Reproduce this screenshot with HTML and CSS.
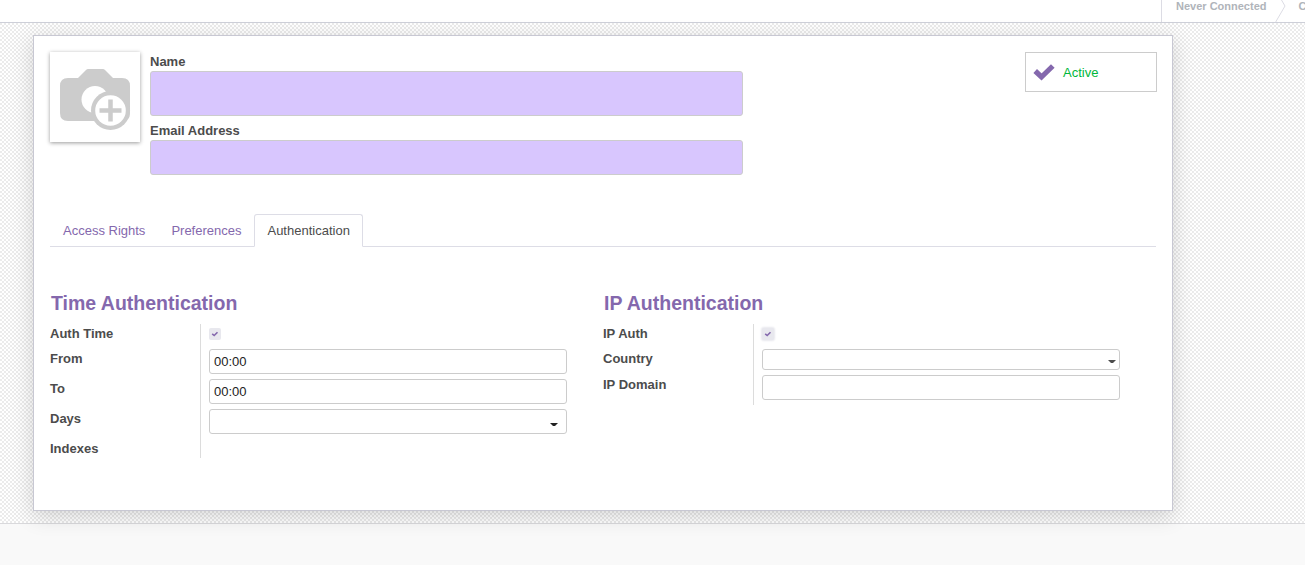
FILE: index.html
```html
<!DOCTYPE html>
<html lang="en">
<head>
<meta charset="utf-8">
<title>User</title>
<link rel="stylesheet" href="styles.css">
</head>
<body>
<header class="control-bar">
  <div class="status-bar">
    <span class="status">Never Connected</span>
    <svg class="status-arrow" width="12" height="36" viewBox="0 0 12 36" aria-hidden="true"><path d="M.5 0 11 18 .5 36" fill="none" stroke="#dcdce4"/></svg>
    <span class="status">Confirmed</span>
  </div>
</header>
<main class="form-view">
  <form class="sheet">
    <div class="top">
      <button type="button" class="avatar" aria-label="Upload photo">
        <svg width="90" height="90" viewBox="0 0 90 90" aria-hidden="true">
          <path fill="#ccc" d="M18 26h10l8-8q1-1 2-1h15q1 0 2 1l8 8h9q8 0 8 8v27q0 8-8 8H18q-8 0-8-8V34q0-8 8-8z"/>
          <circle cx="45" cy="47.500" r="13.500" fill="#fff"/>
          <circle cx="60.500" cy="58.500" r="19.500" fill="#ccc"/>
          <circle cx="60.500" cy="58.500" r="15.300" fill="#fff"/>
          <path d="M60.500 47.500v22M49.500 58.500h22" stroke="#ccc" stroke-width="4.500"/>
        </svg>
      </button>
      <div class="identity">
        <label for="name">Name</label>
        <input class="required name" id="name" type="text">
        <label for="email">Email Address</label>
        <input class="required email" id="email" type="email">
      </div>
      <button type="button" class="active-toggle">
        <svg width="22" height="18" viewBox="0 0 22 18" aria-hidden="true"><path d="M2.200 8 8.500 14 19.800 3" fill="none" stroke="#8468ad" stroke-width="5.200"/></svg>
        Active
      </button>
    </div>
    <div class="tabs" role="tablist">
      <button type="button" class="tab" role="tab">Access Rights</button>
      <button type="button" class="tab" role="tab">Preferences</button>
      <button type="button" class="tab selected" role="tab" aria-selected="true">Authentication</button>
    </div>
    <div class="groups">
      <section class="group">
        <h2>Time Authentication</h2>
        <div class="rows">
          <div class="row"><label for="auth-time">Auth Time</label><div class="cell check-cell"><span class="check"><input id="auth-time" type="checkbox" checked><svg class="tick" width="8" height="8" viewBox="0 0 8 8" aria-hidden="true"><path d="M1.200 3.800 3.200 5.500 6.500 2.200" fill="none" stroke="#8468ad" stroke-width="1.600"/></svg></span></div></div>
          <div class="row"><label for="from">From</label><div class="cell"><input class="field" id="from" type="text" value="00:00"></div></div>
          <div class="row"><label for="to">To</label><div class="cell"><input class="field" id="to" type="text" value="00:00"></div></div>
          <div class="row"><label for="days">Days</label><div class="cell select-cell"><select class="field" id="days"><option></option></select><svg class="caret days-caret" width="8" height="4" viewBox="0 0 8 4" aria-hidden="true"><path d="M0 0h8L5 3H3z" fill="#222"/></svg></div></div>
          <div class="row last"><span class="label">Indexes</span><div class="cell"></div></div>
        </div>
      </section>
      <section class="group">
        <h2>IP Authentication</h2>
        <div class="rows">
          <div class="row"><label for="ip-auth">IP Auth</label><div class="cell check-cell"><span class="check focused"><input id="ip-auth" type="checkbox" checked><svg class="tick" width="8" height="8" viewBox="0 0 8 8" aria-hidden="true"><path d="M1.200 3.800 3.200 5.500 6.500 2.200" fill="none" stroke="#8468ad" stroke-width="1.600"/></svg></span></div></div>
          <div class="row"><label for="country">Country</label><div class="cell select-cell"><select class="field short" id="country"><option></option></select><svg class="caret" width="8" height="4" viewBox="0 0 8 4" aria-hidden="true"><path d="M0 0h8L5 3H3z" fill="#4c4c4c"/></svg></div></div>
          <div class="row"><label for="domain">IP Domain</label><div class="cell"><input class="field" id="domain" type="text"></div></div>
        </div>
      </section>
    </div>
  </form>
</main>
</body>
</html>
```

FILE: styles.css
```css
* { box-sizing: border-box; }
body {
  margin: 0;
  min-height: 100vh;
  overflow: hidden;
  background: #f9f9f9;
  color: #4c4c4c;
  font: 13px/19px "Liberation Sans", Arial, sans-serif;
}
button, input, select { font: inherit; color: inherit; }
button { cursor: pointer; }

.control-bar {
  display: flex;
  justify-content: flex-end;
  align-items: flex-end;
  height: 23px;
  overflow: hidden;
  background: #fff;
  border-bottom: 1px solid #cdcfd8;
}
.status-bar {
  display: flex;
  align-items: center;
  width: 144px;
  height: 32px;
  overflow: hidden;
  border-left: 1px solid #dcdce4;
  font-size: 11px;
  font-weight: bold;
  color: #b0b4ba;
  white-space: nowrap;
}
.status { flex: none; padding: 0 8px 0 14px; }
.status-arrow { flex: none; }
.status-arrow + .status { padding-left: 12px; }

.form-view {
  padding: 12px 33px;
  border-bottom: 1px solid #d9d9dc;
  background: repeating-conic-gradient(#fff 0 25%, #ebebeb 0 50%) 0 0 / 4px 4px;
}
.sheet {
  max-width: 1140px;
  padding: 16px 16px 52px;
  background: #fff;
  border: 1px solid #c8c8d3;
  box-shadow: 0 5px 20px rgba(0, 0, 0, .16);
}
.top { display: flex; align-items: flex-start; margin-right: -1px; }
.avatar {
  flex: none;
  width: 90px;
  height: 90px;
  padding: 0;
  border: 0;
  background: #fff;
  box-shadow: 0 1px 4px rgba(0, 0, 0, .4);
}
.avatar svg { display: block; }
label, .label { font-weight: bold; }
.identity {
  flex: 0 1 603px;
  display: flex;
  flex-direction: column;
  padding-left: 10px;
}
.required {
  width: 100%;
  padding: 4px;
  border: 1px solid #ccc;
  border-radius: 3px;
  background: #d8c6fe;
}
.name { height: 45px; margin-bottom: 5px; font-size: 26px; }
.email { height: 35px; }
.active-toggle {
  display: flex;
  align-items: center;
  gap: 8px;
  width: 132px;
  height: 40px;
  margin-left: auto;
  padding: 0 7px;
  border: 1px solid #ccc;
  background: #fff;
  color: #00b73c;
}

.tabs { display: flex; margin-top: 39px; border-bottom: 1px solid #dddde6; }
.tab {
  height: 33px;
  margin-bottom: -1px;
  padding: 0 12px;
  border: 1px solid transparent;
  border-radius: 3px 3px 0 0;
  background: none;
  color: #8468ad;
}
.tab.selected { background: #fff; border-color: #dddde6 #dddde6 #fff; color: #4c4c4c; }

.groups { display: grid; grid-template-columns: 1fr 1fr; margin-top: 44px; }
.group { padding-right: 36px; }
h2 { margin: 0 0 9px; padding-left: 1px; font-size: 1.5em; line-height: 24px; color: #8468ad; }
.row { display: flex; align-items: stretch; }
.row > label, .label { flex: 0 0 150px; }
.cell {
  flex: 1;
  min-width: 0;
  padding: 0 0 5px 8px;
  border-left: 1px solid #dcdcdc;
}
.last .cell { padding: 0; }
.field {
  display: block;
  width: 100%;
  height: 25px;
  padding: 0 4px;
  border: 1px solid #ccc;
  border-radius: 3px;
  background: #fff;
  color: #222;
}
.short { height: 21px; }
select.field { appearance: none; }
.select-cell { position: relative; }
.caret { position: absolute; right: 4px; top: 11px; pointer-events: none; }
.days-caret { right: 9px; top: 14px; }
.check-cell { height: 25px; padding-top: 4px; }
.check {
  position: relative;
  display: block;
  width: 12px;
  height: 12px;
}
.check input {
  appearance: none;
  display: block;
  width: 12px;
  height: 12px;
  margin: 0;
  border-radius: 2px;
  background: #e8e8ee;
}
.focused input { box-shadow: 0 0 2px 1px #e8e8ee; }
.tick { position: absolute; left: 2px; top: 2px; pointer-events: none; }
```
